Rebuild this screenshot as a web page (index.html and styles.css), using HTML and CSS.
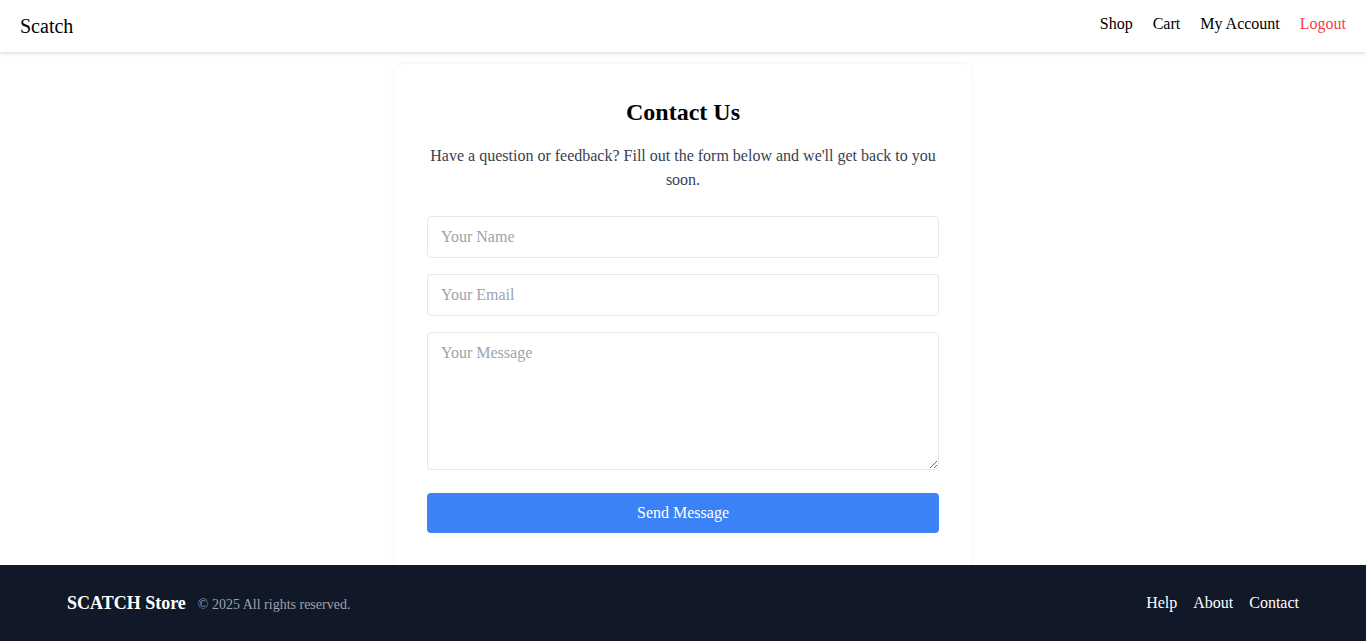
FILE: index.html
```html
<!DOCTYPE html>
<html lang="en">
<head>
<meta charset="utf-8">
<title>Contact Us - Scatch</title>
<link rel="stylesheet" href="styles.css">
</head>
<body>
<header class="site-header">
  <a class="brand" href="#">Scatch</a>
  <nav class="main-nav">
    <a href="#">Shop</a>
    <a href="#">Cart</a>
    <a href="#">My Account</a>
    <a href="#" class="logout">Logout</a>
  </nav>
</header>
<main class="page">
  <section class="card">
    <h1 class="title">Contact Us</h1>
    <p class="lead">Have a question or feedback? Fill out the form below and we'll get back to you soon.</p>
    <form class="form">
      <input class="field" type="text" placeholder="Your Name">
      <input class="field" type="email" placeholder="Your Email">
      <textarea class="field area" placeholder="Your Message"></textarea>
      <button class="submit" type="button">Send Message</button>
    </form>
  </section>
</main>
<footer class="site-footer">
  <div class="footer-inner">
    <div class="footer-left">
      <span class="footer-brand">SCATCH Store</span>
      <span class="copy">© 2025 All rights reserved.</span>
    </div>
    <nav class="footer-nav">
      <a href="#">Help</a>
      <a href="#">About</a>
      <a href="#">Contact</a>
    </nav>
  </div>
</footer>
</body>
</html>
```
FILE: styles.css
```css
* { box-sizing: border-box; }
html, body { margin: 0; padding: 0; }
body {
  font-family: "Liberation Serif", "Times New Roman", serif;
  color: #000;
  background: #fff;
  min-height: 641px;
  display: flex;
  flex-direction: column;
}
a { text-decoration: none; color: inherit; }

.site-header {
  display: flex;
  justify-content: space-between;
  align-items: flex-start;
  padding: 12px 20px;
  height: 52px;
  background: #fff;
  box-shadow: 0 2px 4px rgba(0,0,0,0.08), 0 1px 2px rgba(0,0,0,0.06);
  position: relative;
  z-index: 1;
}
.brand { font-size: 20px; line-height: 28px; color: #000; }
.main-nav { display: flex; gap: 20px; font-size: 16px; line-height: 24px; }
.main-nav a { color: #000; }
.main-nav .logout { color: #ef4444; }

.page {
  flex: 1;
  display: flex;
  justify-content: center;
  padding-top: 12px;
}
.card {
  width: 576px;
  background: #fff;
  border-radius: 8px 8px 0 0;
  box-shadow: 0 0 6px rgba(0,0,0,0.06);
  padding: 32px 32px 32px;
}
.title {
  margin: 0 0 16px;
  text-align: center;
  font-size: 24px;
  line-height: 32px;
  font-weight: bold;
}
.lead {
  margin: 0 0 24px;
  text-align: center;
  font-size: 16px;
  line-height: 24px;
  color: #374151;
}
.form { display: flex; flex-direction: column; gap: 16px; margin: 0; }
.field {
  display: block;
  width: 100%;
  height: 42px;
  padding: 12px 13px;
  font-family: inherit;
  font-size: 16px;
  line-height: 16px;
  color: #111827;
  border: 1px solid #e5e7eb;
  border-radius: 4px;
  background: #fff;
  outline: none;
}
.field::placeholder { color: #9ca3af; }
.area { height: 138px; resize: vertical; line-height: 18px; padding-top: 11px; }
.submit {
  margin-top: 7px;
  height: 40px;
  width: 100%;
  border: none;
  border-radius: 4px;
  background: #3b82f6;
  color: #fff;
  font-family: inherit;
  font-size: 16px;
  cursor: pointer;
}

.site-footer {
  background: #111827;
  color: #fff;
  height: 76px;
}
.footer-inner {
  max-width: 1280px;
  margin: 0 auto;
  padding: 24px 24px;
  display: flex;
  justify-content: space-between;
  align-items: center;
  height: 76px;
}
.footer-left { display: flex; align-items: baseline; gap: 12px; }
.footer-brand { font-size: 18px; line-height: 28px; font-weight: bold; }
.copy { font-size: 14px; line-height: 20px; color: #9ca3af; }
.footer-nav { display: flex; gap: 16px; font-size: 16px; line-height: 24px; }
.footer-nav a { color: #fff; }
```
